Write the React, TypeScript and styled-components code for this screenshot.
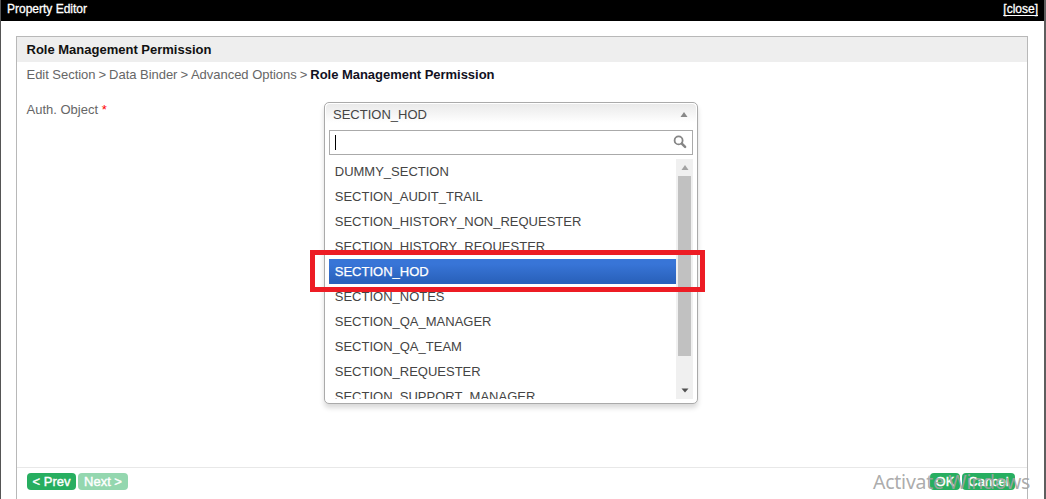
import React from "react";
import styled, { createGlobalStyle, css } from "styled-components";

const GlobalStyle = createGlobalStyle`
  *, *::before, *::after { box-sizing: border-box; }
  html, body { margin: 0; padding: 0; overflow: hidden; background: #fff; }
  body { font: 13px/15px "Liberation Sans", Arial, sans-serif; color: #666; }
`;

const Shell = styled.div`
  position: relative;
  width: 1046px;
  height: 499px;
  overflow: hidden;
  display: flex;
  flex-direction: column;
  border-left: 1px solid #555;
  border-right: 2px solid #5e5e5e;
  background: #fff;
`;

const TitleBar = styled.header`
  flex: none;
  height: 21px;
  padding: 2px 6px 0;
  display: flex;
  justify-content: space-between;
  background: #000;
  color: #fff;
  font-size: 12px;
  line-height: 14px;
  -webkit-text-stroke: 0.3px #fff;
`;

const CloseLink = styled.a`
  height: 14px;
  text-decoration: underline;
  text-underline-offset: 2px;
`;

const Panel = styled.main`
  flex: 1;
  min-height: 0;
  margin: 15px 16px 0 15px;
  display: flex;
  flex-direction: column;
  border: 1px solid #b8b8b8;
  border-bottom: 0;
`;

const PanelHeading = styled.h1`
  flex: none;
  height: 25px;
  margin: 0;
  padding: 5px 9.5px;
  background: #eee;
  color: #111;
  font-size: 13px;
  line-height: 15px;
  font-weight: bold;
`;

const Breadcrumb = styled.nav`
  flex: none;
  height: 35px;
  padding: 5px 9.5px;
  display: flex;
  gap: 3px;
  letter-spacing: -0.03px;
  white-space: nowrap;
  strong { color: #112; }
`;

const FormRow = styled.div`
  flex: 1;
  min-height: 0;
  display: grid;
  grid-template-columns: 298px 374px;
  padding: 5px 9px 0;
`;

const Label = styled.label`
  padding-left: 0.5px;
  span { color: #f00; }
`;

const Select = styled.div`
  height: 302px;
  border: 1px solid #aaa;
  border-radius: 5px;
  background: #fff;
  color: #444;
  box-shadow: 0 4px 5px rgba(0, 0, 0, 0.15);
`;

const Selected = styled.div`
  height: 25px;
  margin: 1px 1px;
  padding: 0 8px 4px 7px;
  display: flex;
  align-items: center;
  justify-content: space-between;
  border-radius: 4px 4px 0 0;
  background: linear-gradient(#eaeaea, #fff 75%);
  line-height: 21px;
`;

const Search = styled.div`
  height: 25px;
  margin: 0 4px 4px;
  padding: 0 5px;
  display: flex;
  align-items: center;
  justify-content: space-between;
  border: 1px solid #aaa;
  svg { margin-bottom: 2px; }
`;

const Caret = styled.span`
  width: 1px;
  height: 15px;
  background: #000;
`;

const ListArea = styled.div`
  height: 240px;
  margin: 0 4px;
  display: flex;
`;

const Options = styled.ul`
  flex: 1;
  height: 240px;
  margin: 0;
  padding: 0;
  overflow: hidden;
  list-style: none;
`;

const Option = styled.li<{ $active?: boolean }>`
  height: 25px;
  padding: 5px 5.75px;
  line-height: 15px;
  white-space: nowrap;
  ${({ $active }) =>
    $active &&
    css`
      color: #fff;
      background: linear-gradient(#3875d7 20%, #2a62bc 90%);
      -webkit-text-stroke: 0.25px #fff;
    `}
`;

const Scrollbar = styled.div`
  width: 17px;
  display: flex;
  flex-direction: column;
  align-items: center;
  background: #f0f0f0;
`;

const ScrollButton = styled.div`
  height: 17px;
  display: flex;
  align-items: center;
`;

const Thumb = styled.div`
  width: 13px;
  height: 180px;
  margin-bottom: auto;
  background: #c1c1c1;
`;

const Footer = styled.footer`
  flex: none;
  height: 32px;
  padding: 5px 12px 0 10px;
  display: flex;
  justify-content: space-between;
  border-top: 1px solid #e8e8e8;
`;

const ButtonGroup = styled.div`
  display: flex;
  gap: 2px;
`;

const Button = styled.button<{ $width: number; $faded?: boolean }>`
  width: ${({ $width }) => $width}px;
  height: 17px;
  padding: 0;
  border: 0;
  border-radius: 4px;
  background: ${({ $faded }) => ($faded ? "#94d7af" : "#27ae60")};
  color: #fff;
  font: 13px/17px "Liberation Sans", Arial, sans-serif;
  -webkit-text-stroke: 0.4px #fff;
`;

const Highlight = styled.div`
  position: absolute;
  left: 309px;
  top: 250px;
  width: 395px;
  height: 42px;
  border: 5px solid #ed1c24;
  pointer-events: none;
`;

const Watermark = styled.div`
  position: absolute;
  left: 872px;
  top: 468px;
  color: rgba(162, 162, 162, 0.9);
  font: 400 19.5px/28px "Noto Sans", sans-serif;
  letter-spacing: -0.25px;
  white-space: nowrap;
  pointer-events: none;
`;

const Triangle = ({ down, color }: { down?: boolean; color: string }) => (
  <svg width="8" height="5" viewBox="0 0 8 5">
    <path d={down ? "M0.5 0.5h7L4 4.5z" : "M0.5 5h7L4 0z"} fill={color} />
  </svg>
);

const SearchIcon = () => (
  <svg width="14" height="14" viewBox="0 0 14 14" fill="none" stroke="#858585">
    <circle cx="5.6" cy="5.4" r="4" strokeWidth="1.8" />
    <path d="M8.8 8.6l3.3 3.3" strokeWidth="2.5" strokeLinecap="round" />
  </svg>
);

const options = [
  "DUMMY_SECTION",
  "SECTION_AUDIT_TRAIL",
  "SECTION_HISTORY_NON_REQUESTER",
  "SECTION_HISTORY_REQUESTER",
  "SECTION_HOD",
  "SECTION_NOTES",
  "SECTION_QA_MANAGER",
  "SECTION_QA_TEAM",
  "SECTION_REQUESTER",
  "SECTION_SUPPORT_MANAGER",
];

const steps = ["Edit Section", "Data Binder", "Advanced Options"];

export default function App() {
  return (
    <>
      <GlobalStyle />
      <Shell>
        <TitleBar>
          <span>Property Editor</span>
          <CloseLink>[close]</CloseLink>
        </TitleBar>
        <Panel>
          <PanelHeading>Role Management Permission</PanelHeading>
          <Breadcrumb>
            {steps.map((step) => (
              <React.Fragment key={step}>
                <span>{step}</span>
                <span>&gt;</span>
              </React.Fragment>
            ))}
            <strong>Role Management Permission</strong>
          </Breadcrumb>
          <FormRow>
            <Label>Auth. Object <span>*</span></Label>
            <Select>
              <Selected>
                SECTION_HOD
                <Triangle color="#888" />
              </Selected>
              <Search>
                <Caret />
                <SearchIcon />
              </Search>
              <ListArea>
                <Options>
                  {options.map((name) => (
                    <Option key={name} $active={name === "SECTION_HOD"}>{name}</Option>
                  ))}
                </Options>
                <Scrollbar>
                  <ScrollButton><Triangle color="#a3a3a3" /></ScrollButton>
                  <Thumb />
                  <ScrollButton><Triangle down color="#505050" /></ScrollButton>
                </Scrollbar>
              </ListArea>
            </Select>
          </FormRow>
          <Footer>
            <ButtonGroup>
              <Button $width={49}>&lt; Prev</Button>
              <Button $width={50} $faded>Next &gt;</Button>
            </ButtonGroup>
            <ButtonGroup>
              <Button $width={30}>OK</Button>
              <Button $width={53}>Cancel</Button>
            </ButtonGroup>
          </Footer>
        </Panel>
        <Highlight />
        <Watermark>Activate Windows</Watermark>
      </Shell>
    </>
  );
}
